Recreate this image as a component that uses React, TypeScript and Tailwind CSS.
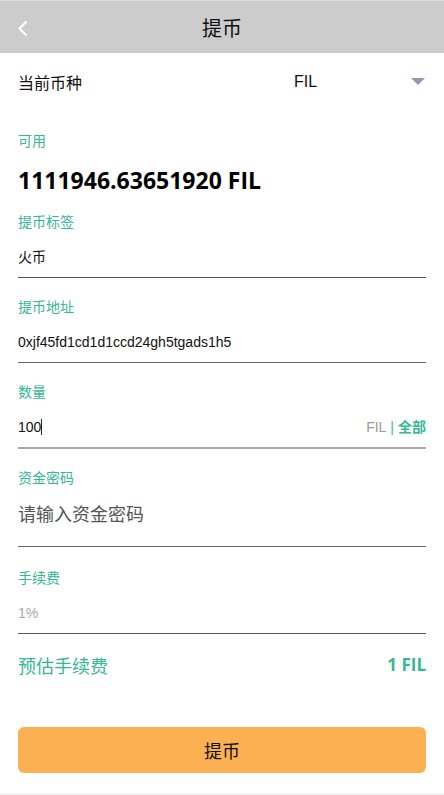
const TEAL = 'text-[#36b795]'

function Field({
  label,
  children,
  mt,
  valueClass,
  lineClass,
}: {
  label: string
  children: React.ReactNode
  mt: string
  valueClass: string
  lineClass: string
}) {
  return (
    <div className={mt}>
      <div className={`text-[14px] leading-[20px] font-['Noto_Sans_CJK_SC',sans-serif] ${TEAL}`}>{label}</div>
      <div className={`flex items-center justify-between ${valueClass} ${lineClass}`}>{children}</div>
    </div>
  )
}

export default function App() {
  return (
    <div className="w-[444px] h-[795px] bg-white font-['Liberation_Sans','Noto_Sans_CJK_SC',sans-serif] text-[#111] flex flex-col">
      {/* header */}
      <div className="h-[53px] bg-[#cccccc] border-t border-[#dedede] relative flex items-center justify-center">
        <svg className="absolute left-[17px] top-[19px]" width="12" height="17" viewBox="0 0 12 17" fill="none">
          <path d="M9.5 1.5 L2.5 8.5 L9.5 15.5" stroke="white" strokeWidth="2" />
        </svg>
        <span className="text-[20px] leading-none font-['Noto_Sans_CJK_SC',sans-serif] mt-[1px]">提币</span>
      </div>

      <div className="px-[18px] flex flex-col">
        {/* currency row */}
        <div className="h-[57px] flex items-center">
          <span className="text-[16px] font-['Noto_Sans_CJK_SC',sans-serif] flex-1">当前币种</span>
          <span className="text-[16px] w-[117px]">FIL</span>
          <svg width="14" height="7" viewBox="0 0 14 7" className="mr-[1px]">
            <path d="M0 0 H14 L7 7 Z" fill="#8e9ab0" />
          </svg>
        </div>

        {/* available */}
        <div className="pt-[20px]">
          <div className={`text-[14px] leading-[20px] font-['Noto_Sans_CJK_SC',sans-serif] ${TEAL}`}>可用</div>
          <div className="mt-[15px] text-[23px] leading-[30px] font-bold font-['Open_Sans',sans-serif] text-black">
            1111946.63651920 FIL
          </div>
        </div>

        <Field label="提币标签" mt="mt-[16px]" valueClass="pt-[16px] pb-[10px] text-[14px] leading-[20px]" lineClass="border-b border-[#555]">
          <span>火币</span>
        </Field>

        <Field label="提币地址" mt="mt-[18px]" valueClass="pt-[16px] pb-[10px] text-[14px] leading-[20px]" lineClass="border-b border-[#666]">
          <span>0xjf45fd1cd1d1ccd24gh5tgads1h5</span>
        </Field>

        <Field label="数量" mt="mt-[18px]" valueClass="pt-[15px] pb-[10px] text-[14px] leading-[20px]" lineClass="border-b-2 border-[#aaaaaa]">
          <span className="flex items-center">
            100<span className="inline-block w-px h-[16px] bg-[#222]" />
          </span>
          <span className="text-[14px]">
            <span className="text-[#999]">FIL</span>
            <span className="text-[#36b795] mx-[4px]">|</span>
            <span className="text-[#36b795] font-bold font-['Noto_Sans_CJK_SC',sans-serif]">全部</span>
          </span>
        </Field>

        <Field label="资金密码" mt="mt-[18px]" valueClass="pt-[14px] pb-[21px] text-[18px] leading-[24px]" lineClass="border-b border-[#666]">
          <span className="text-[#555] font-['Noto_Sans_CJK_SC',sans-serif]">请输入资金密码</span>
        </Field>

        <Field label="手续费" mt="mt-[20px]" valueClass="pt-[16px] pb-[10px] text-[14px] leading-[20px]" lineClass="border-b border-[#555]">
          <span className="text-[#aaa]">1%</span>
        </Field>

        {/* estimated fee */}
        <div className="mt-[19px] flex items-center justify-between h-[24px]">
          <span className={`text-[18px] ${TEAL} font-['Noto_Sans_CJK_SC',sans-serif]`}>预估手续费</span>
          <span className={`text-[17px] font-bold font-['Open_Sans',sans-serif] ${TEAL}`}>1 FIL</span>
        </div>

        <button className="mt-[50px] h-[46px] w-full rounded-[6px] bg-[#fbb152] text-[18px] text-[#111] font-['Noto_Sans_CJK_SC',sans-serif]">
          提币
        </button>
      </div>

      <div className="mt-auto h-[2px] bg-[#f2f2f2]" />
    </div>
  )
}
